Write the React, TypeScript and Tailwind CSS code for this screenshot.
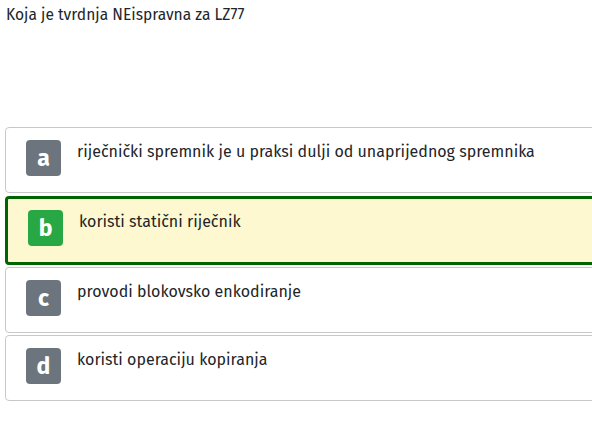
const answers = [
    { key: "a", text: "riječnički spremnik je u praksi dulji od unaprijednog spremnika", selected: false },
    { key: "b", text: "koristi statični riječnik", selected: true },
    { key: "c", text: "provodi blokovsko enkodiranje", selected: false },
    { key: "d", text: "koristi operaciju kopiranja", selected: false },
];

export default function App() {
    return (
        <main className="w-[592px] h-[423px] overflow-hidden bg-white text-[#212529] font-['Fira_Sans','Noto_Sans',sans-serif]">
            <h1 className="pl-[6px] pt-[5px] text-[15.6px] leading-[20px]">Koja je tvrdnja NEispravna za LZ77</h1>
            <div className="mt-[102px] ml-[5px] w-[620px] flex flex-col gap-[2px]">
                {answers.map(a => (
                    <div
                        key={a.key}
                        className={`${a.selected ? "border-[3px] border-[#006400] bg-[#fdf8cf] pl-[20px] pt-[11px] h-[69px] mt-[1px]" : "border border-[#c8c8c8] bg-white pl-[20px] pt-[12px] h-[66px]"} rounded-[4px] flex flex-row gap-[16px]`}
                    >
                        <span className={`${a.selected ? "bg-[#28a745]" : "bg-[#6c757d]"} w-[35px] h-[36px] rounded-[4px] flex items-center justify-center text-white font-bold text-[23px] leading-none shrink-0`}>
                            {a.key}
                        </span>
                        <span className="text-[16px] leading-[22px] pt-[1px]">{a.text}</span>
                    </div>
                ))}
            </div>
        </main>
    );
}
